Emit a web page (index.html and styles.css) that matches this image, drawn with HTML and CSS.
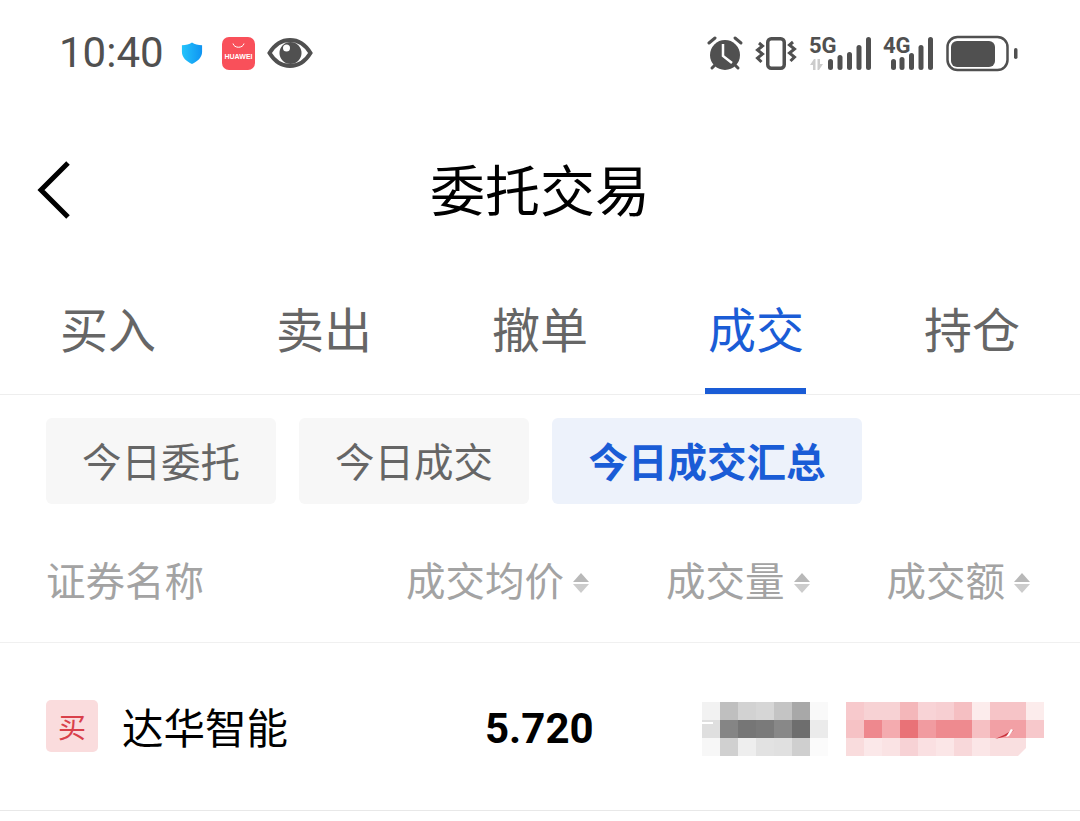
FILE: index.html
```html
<!DOCTYPE html>
<html lang="zh-CN">
<head>
  <meta charset="UTF-8" />
  <title>委托交易</title>
  <link rel="stylesheet" href="styles.css">
</head>
<body>
  <div class="status-bar">
    <div class="status-left">
      <span class="clock">10:40</span>
      <svg class="shield" width="22" height="22" viewBox="0 0 24 24">
        <defs>
          <linearGradient id="shieldFill" x1="0" x2="1" y1="0" y2="0">
            <stop offset="0" stop-color="#24c4fb" />
            <stop offset="1" stop-color="#0f94f2" />
          </linearGradient>
        </defs>
        <path d="M12 0.500 C15 2.500 18.500 3.500 23 3.500 V11 C23 17 18 21.500 12 24 C6 21.500 1 17 1 11 V3.500 C5.500 3.500 9 2.500 12 0.500 Z" fill="url(#shieldFill)" />
      </svg>
      <svg class="store" width="33" height="33" viewBox="0 0 33 33">
        <rect width="33" height="33" rx="7" fill="#f9505a" />
        <path d="M11 6.500 C12 11.500 21 11.500 22 6.500" fill="none" stroke="#fff" stroke-width="1" />
        <text x="16.500" y="21.500" text-anchor="middle" class="store-text">HUAWEI</text>
      </svg>
      <svg class="eye" width="46" height="30" viewBox="0 0 46 30">
        <path d="M2.500 15 C8 6 15 2 23 2 C31 2 38 6 43.500 15 C38 24 31 28 23 28 C15 28 8 24 2.500 15 Z" fill="none" stroke="#505050" stroke-width="4" />
        <circle cx="23.500" cy="15" r="11" fill="#505050" />
        <circle cx="19.500" cy="10" r="3.500" fill="#fff" />
      </svg>
    </div>
    <div class="status-right">
      <svg class="alarm" width="38" height="36" viewBox="0 0 38 36">
        <g stroke="#505050" stroke-width="3" stroke-linecap="round" fill="none">
          <path d="M2 8 L8 3" />
          <path d="M34 8 L28 3" />
          <path d="M8 30 L5 33" />
          <path d="M28 30 L31 33" />
        </g>
        <circle cx="18" cy="20" r="15" fill="#505050" />
        <path d="M16 9 V21 L25 28" fill="none" stroke="#fff" stroke-width="2.500" />
      </svg>
      <svg width="42" height="36" viewBox="0 0 42 36">
        <rect x="12.750" y="3.750" width="16.500" height="29.500" rx="3.500" fill="none" stroke="#505050" stroke-width="3.500" />
        <g fill="none" stroke="#505050" stroke-width="3">
          <path d="M4 8 L7.500 11 L2.500 15 L7.500 19 L2.500 23 L6.500 27" />
          <path d="M38 7 L34.500 10 L39.500 14 L34.500 18 L39.500 22 L35.500 26" />
        </g>
      </svg>
      <svg width="62" height="44" viewBox="0 -4 62 44">
        <text x="0" y="18" class="net-text">5G</text>
        <g fill="#cccccc">
          <path d="M5 24 L1 30 H4 V35 H6.500 V24 Z" />
          <path d="M10 35 L14 29 H11 V24 H8.500 V35 Z" />
        </g>
        <g fill="#505050">
          <rect x="19" y="24" width="5" height="11" rx="2.500" />
          <rect x="28.500" y="20" width="5" height="15" rx="2.500" />
          <rect x="38" y="17" width="5" height="18" rx="2.500" />
          <rect x="47.500" y="10" width="5" height="25" rx="2.500" />
          <rect x="57" y="2" width="5" height="33" rx="2.500" />
        </g>
      </svg>
      <svg class="net-four" width="50" height="44" viewBox="0 -4 50 44">
        <text x="0" y="18" class="net-text">4G</text>
        <g fill="#505050">
          <rect x="8" y="24" width="5" height="11" rx="2.500" />
          <rect x="16.500" y="22" width="5" height="13" rx="2.500" />
          <rect x="26" y="18" width="5" height="17" rx="2.500" />
          <rect x="35.500" y="10" width="5" height="25" rx="2.500" />
          <rect x="45" y="2" width="5" height="33" rx="2.500" />
        </g>
      </svg>
      <svg width="72" height="38" viewBox="0 0 72 38">
        <rect x="1.500" y="3" width="60" height="33" rx="10" fill="none" stroke="#505050" stroke-width="2.500" />
        <rect x="5" y="7" width="44" height="26" rx="6" fill="#505050" />
        <rect x="68" y="14" width="3.500" height="11" rx="1.750" fill="#505050" />
      </svg>
    </div>
  </div>

  <div class="title-bar">
    <svg class="back" width="36" height="60" viewBox="0 0 36 60">
      <path d="M31 3 L4 30 L31 57" fill="none" stroke="#000" stroke-width="5" />
    </svg>
    <h1>委托交易</h1>
  </div>

  <div class="tabs">
    <div class="tab">买入</div>
    <div class="tab">卖出</div>
    <div class="tab">撤单</div>
    <div class="tab active">成交</div>
    <div class="tab">持仓</div>
  </div>

  <div class="chips">
    <div class="chip">今日委托</div>
    <div class="chip">今日成交</div>
    <div class="chip active">今日成交汇总</div>
  </div>

  <div class="table-head">
    <div class="col-name">证券名称</div>
    <div class="col col-price">成交均价<span class="sort"></span></div>
    <div class="col col-qty">成交量<span class="sort"></span></div>
    <div class="col col-amount">成交额<span class="sort"></span></div>
  </div>

  <div class="row">
    <div class="stock">
      <span class="badge">买</span>
      <span class="stock-name">达华智能</span>
    </div>
    <div class="price">5.720</div>
    <svg class="mosaic mosaic-gray" width="126" height="54" viewBox="0 0 126 54" shape-rendering="crispEdges">
      <g transform="scale(18)">
        <rect x="0" y="0" width="1" height="1" fill="#f2f2f2" />
        <rect x="1" y="0" width="1" height="1" fill="#bfbfbf" />
        <rect x="2" y="0" width="1" height="1" fill="#d2d2d2" />
        <rect x="3" y="0" width="1" height="1" fill="#d6d6d6" />
        <rect x="4" y="0" width="1" height="1" fill="#c4c4c4" />
        <rect x="5" y="0" width="1" height="1" fill="#a8a8a8" />
        <rect x="6" y="0" width="1" height="1" fill="#f9f9f9" />
        <rect x="0" y="1" width="1" height="1" fill="#dfdfdf" />
        <rect x="1" y="1" width="1" height="1" fill="#858585" />
        <rect x="2" y="1" width="1" height="1" fill="#767676" />
        <rect x="3" y="1" width="1" height="1" fill="#7a7a7a" />
        <rect x="4" y="1" width="1" height="1" fill="#888888" />
        <rect x="5" y="1" width="1" height="1" fill="#6e6e6e" />
        <rect x="6" y="1" width="1" height="1" fill="#ebebeb" />
        <rect x="0" y="2" width="1" height="1" fill="#f7f7f7" />
        <rect x="1" y="2" width="1" height="1" fill="#d0d0d0" />
        <rect x="2" y="2" width="1" height="1" fill="#eeeeee" />
        <rect x="3" y="2" width="1" height="1" fill="#e2e2e2" />
        <rect x="4" y="2" width="1" height="1" fill="#e0e0e0" />
        <rect x="5" y="2" width="1" height="1" fill="#cfcfcf" />
        <rect x="6" y="2" width="1" height="1" fill="#fbfbfb" />
      </g>
      <rect x="0" y="20" width="11" height="2" fill="#fff" />
    </svg>
    <svg class="mosaic mosaic-red" width="198" height="54" viewBox="0 0 198 54">
      <g transform="scale(18)" shape-rendering="crispEdges">
        <rect x="0" y="0" width="1" height="1" fill="#f7c9cc" />
        <rect x="1" y="0" width="1" height="1" fill="#f7d2d4" />
        <rect x="2" y="0" width="1" height="1" fill="#f7d2d4" />
        <rect x="3" y="0" width="1" height="1" fill="#f4b7ba" />
        <rect x="4" y="0" width="1" height="1" fill="#f8d3d6" />
        <rect x="5" y="0" width="1" height="1" fill="#f7cfd2" />
        <rect x="6" y="0" width="1" height="1" fill="#f5bfc2" />
        <rect x="7" y="0" width="1" height="1" fill="#fcecec" />
        <rect x="8" y="0" width="1" height="1" fill="#f6c4c7" />
        <rect x="9" y="0" width="1" height="1" fill="#f6c4c7" />
        <rect x="10" y="0" width="1" height="1" fill="#fcecec" />
        <rect x="0" y="1" width="1" height="1" fill="#f6c2c5" />
        <rect x="1" y="1" width="1" height="1" fill="#ee888e" />
        <rect x="2" y="1" width="1" height="1" fill="#f4abaf" />
        <rect x="3" y="1" width="1" height="1" fill="#e97277" />
        <rect x="4" y="1" width="1" height="1" fill="#f19ba0" />
        <rect x="5" y="1" width="1" height="1" fill="#ee8a8f" />
        <rect x="6" y="1" width="1" height="1" fill="#ee8a8f" />
        <rect x="7" y="1" width="1" height="1" fill="#f6c0c3" />
        <rect x="8" y="1" width="1" height="1" fill="#f2a0a5" />
        <rect x="9" y="1" width="1" height="1" fill="#f2a0a5" />
        <rect x="10" y="1" width="1" height="1" fill="#f7c8cb" />
        <rect x="0" y="2" width="1" height="1" fill="#f9dcdd" />
        <rect x="1" y="2" width="1" height="1" fill="#fbe8e9" />
        <rect x="2" y="2" width="1" height="1" fill="#fae3e4" />
        <rect x="3" y="2" width="1" height="1" fill="#f7d2d5" />
        <rect x="4" y="2" width="1" height="1" fill="#fae0e2" />
        <rect x="5" y="2" width="1" height="1" fill="#fbe6e7" />
        <rect x="6" y="2" width="1" height="1" fill="#f8d8da" />
        <rect x="7" y="2" width="1" height="1" fill="#fbe6e7" />
        <rect x="8" y="2" width="1" height="1" fill="#f9dfe0" />
        <rect x="9" y="2" width="1" height="1" fill="#f9dfe0" />
      </g>
      <path d="M180 54 L172 54 L180 46 Z" fill="#fff" />
      <path d="M149 37 L158 33 L163 30 L168 28 L162 33 L157 35 Z" fill="#c8323c" />
      <path d="M160 35 L165 27 L167 28 L163 34 Z" fill="#fff" />
    </svg>
  </div>
</body>
</html>
```

FILE: styles.css
```css
* {
  box-sizing: border-box;
  padding: 0;
  margin: 0;
}

body {
  width: 1080px;
  height: 821px;
  overflow: hidden;
  background: #fff;
  font-family: "Noto Sans CJK SC", "Noto Sans", sans-serif;
  color: #000;
}

.status-bar {
  height: 106px;
  padding: 0 62px 0 59px;
  display: flex;
  justify-content: space-between;
  align-items: center;
}

.status-left {
  display: flex;
  align-items: center;
}

.clock {
  font-family: "Roboto", sans-serif;
  font-size: 42px;
  line-height: 46px;
  color: #505050;
}

.shield {
  margin-left: 17px;
}

.store {
  margin-left: 19px;
}

.eye {
  margin-left: 12px;
}

.store-text {
  font-family: "Liberation Sans", sans-serif;
  font-size: 7px;
  font-weight: 700;
  fill: #fff;
}

.status-right {
  display: flex;
  align-items: center;
  gap: 12px;
}

.alarm {
  margin-right: -2px;
}

.net-four {
  margin-right: 1px;
}

.net-text {
  font-family: "Roboto", sans-serif;
  font-size: 22px;
  font-weight: 700;
  fill: #505050;
}

.title-bar {
  height: 168px;
  padding-bottom: 6px;
  display: flex;
  align-items: center;
  justify-content: center;
  position: relative;
}

.title-bar h1 {
  font-size: 55px;
  font-weight: 400;
  line-height: 70px;
}

.back {
  position: absolute;
  left: 37px;
  top: 54px;
}

.tabs {
  height: 121px;
  display: grid;
  grid-template-columns: repeat(5, 216px);
  border-bottom: 1px solid #eeeeee;
}

.tab {
  display: flex;
  justify-content: center;
  align-items: center;
  padding-bottom: 14px;
  font-size: 48px;
  color: #666;
  position: relative;
}

.tab.active {
  color: #1a5cd6;
}

.tab.active::after {
  content: "";
  position: absolute;
  left: 57px;
  bottom: 0;
  width: 101px;
  height: 6px;
  background: #1a5cd6;
}

.chips {
  padding: 23px 46px 0;
  display: flex;
  gap: 23px;
}

.chip {
  height: 86px;
  padding: 0 36px 4px;
  display: flex;
  align-items: center;
  font-size: 39.500px;
  color: #666;
  background: #f7f7f7;
  border-radius: 6px;
}

.chip.active {
  padding: 0 36.500px 4px;
  font-weight: 700;
  color: #1a5cd6;
  background: #edf2fb;
}

.table-head {
  height: 139px;
  padding: 10px 49px 0 46px;
  display: flex;
  align-items: center;
  font-size: 39.500px;
  white-space: nowrap;
  color: #a3a3a3;
  border-bottom: 1px solid #f0f0f0;
}

.col-name {
  width: 360px;
}

.col {
  display: flex;
  align-items: center;
  gap: 9px;
}

.col-qty {
  margin-left: 76px;
}

.col-amount {
  margin-left: 76px;
}

.sort {
  width: 17px;
  height: 20px;
  margin-top: 10px;
  flex: none;
  position: relative;
}

.sort::before,
.sort::after {
  content: "";
  position: absolute;
  left: 0;
  border-left: 8.500px solid transparent;
  border-right: 8.500px solid transparent;
}

.sort::before {
  top: 0;
  border-bottom: 9px solid #b8b8b8;
}

.sort::after {
  bottom: 0;
  border-top: 9px solid #cccccc;
}

.row {
  height: 168px;
  padding: 0 36px 1px 46px;
  display: flex;
  align-items: center;
  border-bottom: 1px solid #e8e8e8;
}

.stock {
  width: 439px;
  display: flex;
  align-items: center;
}

.badge {
  width: 52px;
  height: 52px;
  display: flex;
  justify-content: center;
  align-items: center;
  font-size: 28px;
  color: #d9404a;
  background: #fadcdd;
  border-radius: 5px;
}

.stock-name {
  margin-left: 24px;
  font-size: 41.500px;
}

.price {
  width: 108px;
  margin-top: 4px;
  font-family: "Roboto", sans-serif;
  font-size: 42px;
  font-weight: 700;
  text-align: right;
}

.mosaic {
  margin-top: 6px;
}

.mosaic-gray {
  margin-left: 109px;
}

.mosaic-red {
  margin-left: 18px;
}
```
